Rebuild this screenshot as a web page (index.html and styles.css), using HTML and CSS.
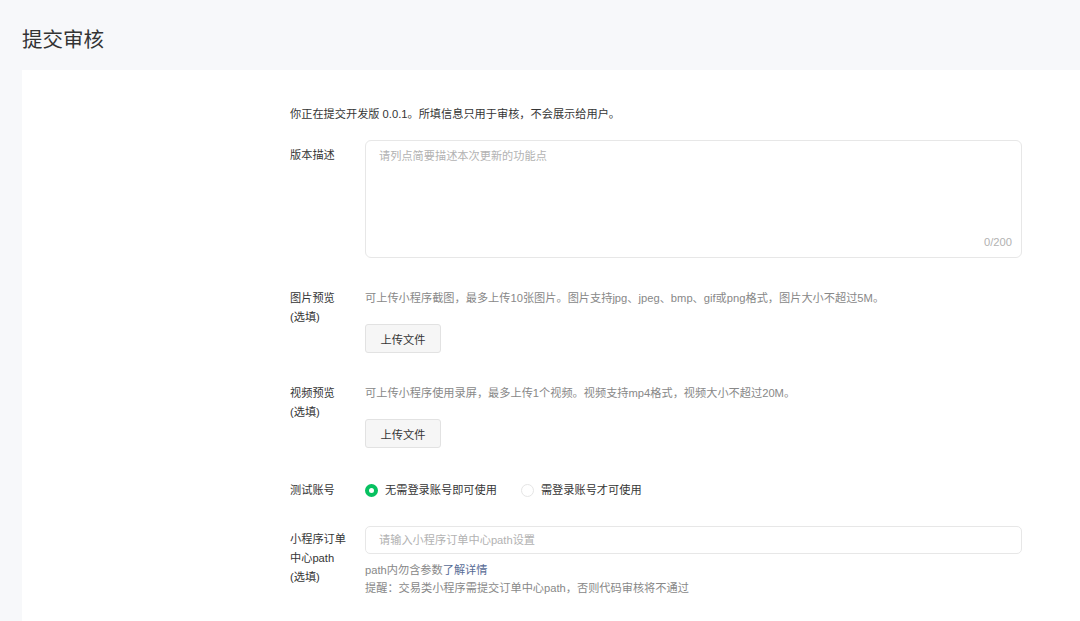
FILE: index.html
```html
<!DOCTYPE html>
<html lang="zh-CN">
<head>
    <meta charset="UTF-8">
    <meta name="viewport" content="width=device-width, initial-scale=1.0">
    <title>提交审核</title>
    <link rel="stylesheet" href="styles.css">
</head>
<body>
    <header id="page-header">
        <h1>提交审核</h1>
    </header>
    <main id="audit-card">
        <p class="intro">你正在提交开发版 0.0.1。所填信息只用于审核，不会展示给用户。</p>

        <div class="form-row row-desc">
            <label class="form-label" for="version-desc">版本描述</label>
            <div class="form-control">
                <div class="textarea-box">
                    <textarea id="version-desc" placeholder="请列点简要描述本次更新的功能点"></textarea>
                    <span class="counter">0/200</span>
                </div>
            </div>
        </div>

        <div class="form-row row-upload">
            <div class="form-label">图片预览<br>(选填)</div>
            <div class="form-control">
                <p class="tips">可上传小程序截图，最多上传10张图片。图片支持jpg、jpeg、bmp、gif或png格式，图片大小不超过5M。</p>
                <button class="btn-upload">上传文件</button>
            </div>
        </div>

        <div class="form-row row-upload">
            <div class="form-label">视频预览<br>(选填)</div>
            <div class="form-control">
                <p class="tips">可上传小程序使用录屏，最多上传1个视频。视频支持mp4格式，视频大小不超过20M。</p>
                <button class="btn-upload">上传文件</button>
            </div>
        </div>

        <div class="form-row row-radio">
            <div class="form-label">测试账号</div>
            <div class="form-control radio-group">
                <label class="radio checked"><span class="radio-dot"></span>无需登录账号即可使用</label>
                <label class="radio"><span class="radio-dot"></span>需登录账号才可使用</label>
            </div>
        </div>

        <div class="form-row row-path">
            <label class="form-label" for="order-path">小程序订单<br>中心path<br>(选填)</label>
            <div class="form-control">
                <input id="order-path" type="text" placeholder="请输入小程序订单中心path设置">
                <p class="hint">path内勿含参数<a href="#">了解详情</a></p>
                <p class="hint">提醒：交易类小程序需提交订单中心path，否则代码审核将不通过</p>
            </div>
        </div>
    </main>
</body>
</html>
```

FILE: styles.css
```css
body {
    margin: 0;
    padding: 0;
    background: #f7f8fa;
    font-family: "Helvetica Neue", "Liberation Sans", "Noto Sans CJK SC", sans-serif;
    font-size: 11.2px;
    color: #353535;
    overflow: hidden;
}
#page-header {
    padding: 26px 22px 16px;
}
#page-header h1 {
    margin: 0;
    font-size: 20.5px;
    line-height: 28px;
    font-weight: normal;
    color: #333;
}
#audit-card {
    box-sizing: border-box;
    height: 551px;
    margin-left: 22px;
    background: #fff;
    padding: 35px 0 0 268px;
}
.intro {
    margin: 0 0 16px;
    line-height: 19px;
}
.form-row {
    display: flex;
    margin-bottom: 31px;
}
.form-label {
    width: 75px;
    flex-shrink: 0;
    line-height: 19px;
}
.form-control {
    width: 657px;
}
.row-desc .form-label {
    padding-top: 6px;
}
.textarea-box {
    position: relative;
}
textarea {
    display: block;
    box-sizing: border-box;
    width: 100%;
    height: 118px;
    padding: 6px 13px;
    border: 1px solid #e7e7e7;
    border-radius: 6px;
    font: inherit;
    line-height: 19px;
    resize: none;
    outline: none;
}
textarea::placeholder,
input::placeholder {
    color: #b2b2b2;
}
.counter {
    position: absolute;
    right: 10px;
    bottom: 6px;
    color: #b2b2b2;
    line-height: 19px;
}
.tips {
    margin: 0 0 16px;
    line-height: 19px;
    color: #888;
}
.btn-upload {
    width: 76px;
    height: 29px;
    padding: 0;
    border: 1px solid #e2e2e2;
    border-radius: 3px;
    background: #f6f6f6;
    font: inherit;
    color: #353535;
    cursor: pointer;
}
.row-radio {
    padding-top: 2px;
    margin-bottom: 26px;
}
.radio-group {
    display: flex;
    align-items: center;
    gap: 24px;
}
.radio {
    display: flex;
    align-items: center;
    line-height: 19px;
}
.radio-dot {
    box-sizing: border-box;
    width: 13px;
    height: 13px;
    margin-right: 7px;
    border: 1px solid #e5e5e5;
    border-radius: 50%;
    background: #fff;
}
.radio.checked .radio-dot {
    border: 4px solid #07c160;
}
.row-path .form-label {
    padding-top: 4px;
}
input {
    display: block;
    box-sizing: border-box;
    width: 100%;
    height: 28px;
    padding: 0 13px;
    border: 1px solid #e7e7e7;
    border-radius: 5px;
    font: inherit;
    outline: none;
}
.hint {
    margin: 0;
    line-height: 18px;
    color: #888;
}
.hint:first-of-type {
    margin-top: 7px;
}
.hint a {
    color: #576b95;
    text-decoration: none;
}
```
